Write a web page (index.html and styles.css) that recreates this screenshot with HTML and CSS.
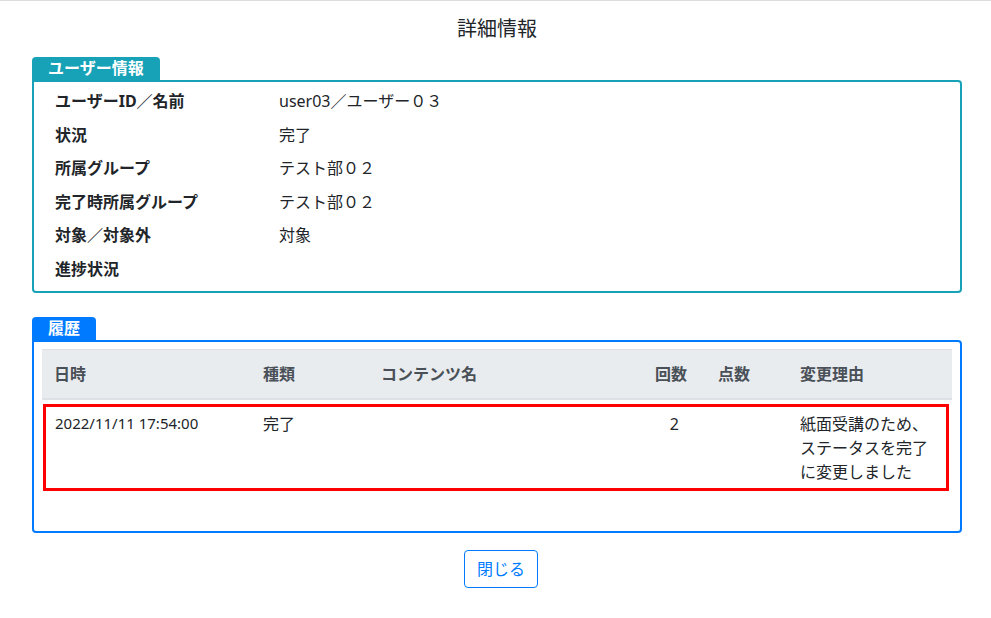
FILE: index.html
```html
<!DOCTYPE html>
<html lang="ja">
<head>
<meta charset="utf-8">
<title>詳細情報</title>
<link rel="stylesheet" href="styles.css">
</head>
<body>
<div class="page">
  <h1 class="title">詳細情報</h1>

  <section class="panel panel-info">
    <div class="tab">ユーザー情報</div>
    <div class="box">
      <div class="info-row"><div class="label">ユーザーID／名前</div><div class="value">user03／ユーザー０３</div></div>
      <div class="info-row"><div class="label">状況</div><div class="value">完了</div></div>
      <div class="info-row"><div class="label">所属グループ</div><div class="value">テスト部０２</div></div>
      <div class="info-row"><div class="label">完了時所属グループ</div><div class="value">テスト部０２</div></div>
      <div class="info-row"><div class="label">対象／対象外</div><div class="value">対象</div></div>
      <div class="info-row"><div class="label">進捗状況</div><div class="value"></div></div>
    </div>
  </section>

  <section class="panel panel-history">
    <div class="tab">履歴</div>
    <div class="box">
      <div class="thead">
        <div class="th">日時</div>
        <div class="th">種類</div>
        <div class="th">コンテンツ名</div>
        <div class="th th-count">回数</div>
        <div class="th th-score">点数</div>
        <div class="th">変更理由</div>
      </div>
      <div class="trow">
        <div class="td td-date">2022/11/11 17:54:00</div>
        <div class="td">完了</div>
        <div class="td"></div>
        <div class="td td-count">2</div>
        <div class="td"></div>
        <div class="td td-reason">紙面受講のため、ステータスを完了に変更しました</div>
      </div>
    </div>
  </section>

  <div class="footer">
    <button class="btn-close" type="button">閉じる</button>
  </div>
</div>
</body>
</html>
```

FILE: styles.css
```css
html, body {
  margin: 0;
  padding: 0;
  background: #fff;
}
body {
  font-family: "Noto Sans", "Noto Sans CJK JP", sans-serif;
  font-size: 16px;
  line-height: 1.5;
  color: #212529;
  border-top: 1px solid #dcdcdc;
}
.page {
  width: 930px;
  margin-left: 32px;
}
.title {
  margin: 13px 0 13px;
  font-size: 20px;
  font-weight: 400;
  line-height: 30px;
  text-align: center;
  color: #212529;
}
.panel {
  display: flex;
  flex-direction: column;
  align-items: flex-start;
}
.tab {
  height: 23px;
  line-height: 23px;
  padding: 0 16px;
  font-weight: 700;
  font-size: 16px;
  color: #fff;
  border-radius: 4px 4px 0 0;
}
.box {
  align-self: stretch;
  border: 2px solid;
  border-radius: 0 4px 4px 4px;
}
.panel-info .tab { background: #17a2b8; }
.panel-info .box {
  border-color: #17a2b8;
  padding: 3px 0 4px 21px;
}
.info-row {
  display: flex;
  line-height: 33.6px;
}
.label {
  width: 224px;
  font-weight: 700;
}
.panel-history {
  margin-top: 24px;
}
.panel-history .tab {
  background: #007bff;
  padding: 0 16px;
}
.panel-history .box {
  border-color: #007bff;
  padding: 7px 8px 40px 8px;
}
.thead {
  display: grid;
  grid-template-columns: 209px 118px 262px 68px 89px 164px;
  background: #e9ecef;
  border-top: 1px solid #dee2e6;
  border-bottom: 2px solid #dee2e6;
}
.th {
  padding: 12px;
  font-weight: 700;
  color: #495057;
}
.th-count { text-align: right; }
.th-score { padding-left: 19px; }
.trow {
  display: grid;
  grid-template-columns: 205px 118px 262px 68px 89px 158px;
  margin: 4px 3px 0 1px;
  border: 3px solid #ff0000;
  padding: 5px 0 4px;
}
.td {
  padding: 0 12px;
}
.td-date {
  padding-left: 9px;
  font-size: 15px;
}
.td-count {
  text-align: right;
  padding-right: 20px;
}
.td-reason {
  padding-right: 10px;
}
.footer {
  display: flex;
  justify-content: center;
  padding-left: 8px;
  margin-top: 17px;
}
.btn-close {
  font-family: inherit;
  font-size: 16px;
  line-height: 24px;
  padding: 6px 12px;
  color: #007bff;
  background: #fff;
  border: 1px solid #007bff;
  border-radius: 4px;
}
```
